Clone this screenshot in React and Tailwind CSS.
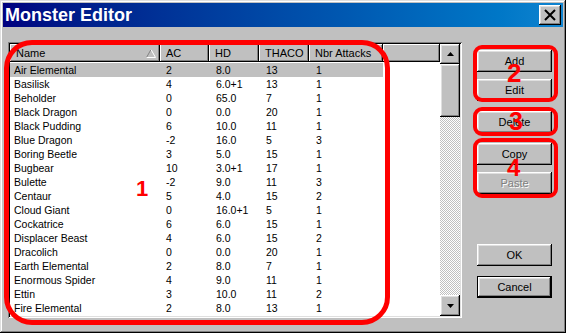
import React from "react";

const MONSTERS = [
  ["Air Elemental", "2", "8.0", "13", "1"],
  ["Basilisk", "4", "6.0+1", "13", "1"],
  ["Beholder", "0", "65.0", "7", "1"],
  ["Black Dragon", "0", "0.0", "20", "1"],
  ["Black Pudding", "6", "10.0", "11", "1"],
  ["Blue Dragon", "-2", "16.0", "5", "3"],
  ["Boring Beetle", "3", "5.0", "15", "1"],
  ["Bugbear", "10", "3.0+1", "17", "1"],
  ["Bulette", "-2", "9.0", "11", "3"],
  ["Centaur", "5", "4.0", "15", "2"],
  ["Cloud Giant", "0", "16.0+1", "5", "1"],
  ["Cockatrice", "6", "6.0", "15", "1"],
  ["Displacer Beast", "4", "6.0", "15", "2"],
  ["Dracolich", "0", "0.0", "20", "1"],
  ["Earth Elemental", "2", "8.0", "7", "1"],
  ["Enormous Spider", "4", "9.0", "11", "1"],
  ["Ettin", "3", "10.0", "11", "2"],
  ["Fire Elemental", "2", "8.0", "13", "1"],
];

const raised =
  "shadow-[inset_-1px_-1px_#000,inset_1px_1px_#fff,inset_-2px_-2px_#808080,inset_2px_2px_#dfdfdf]";

const Button = ({ children, className = "", disabled }) => (
  <button
    type="button"
    className={`w-[75px] h-[22px] bg-[#c0c0c0] ${raised} text-[11px] flex items-center justify-center ${
      disabled ? "text-[#808080] [text-shadow:1px_1px_0_#fff]" : "text-black"
    } ${className}`}
  >
    {children}
  </button>
);

const HeaderCell = ({ w, children, sort }) => (
  <div
    className={`${w} h-[18px] shrink-0 bg-[#c0c0c0] shadow-[inset_-1px_-1px_#000,inset_1px_1px_#fff,inset_-2px_-2px_#808080] flex items-center pl-[6px] pr-[4px] text-[11px] text-black`}
  >
    <span className="flex-1">{children}</span>
    {sort && (
      <svg width="10" height="9" viewBox="0 0 10 9">
        <path d="M0.5 8.5 L5 0.5" stroke="#808080" fill="none" />
        <path d="M5 0.5 L9.5 8.5 L0.5 8.5" stroke="#fff" fill="none" />
      </svg>
    )}
  </div>
);

const Arrow = ({ up }) => (
  <svg width="7" height="4" viewBox="0 0 7 4">
    <path d={up ? "M3.5 0 L7 4 L0 4 Z" : "M0 0 L7 0 L3.5 4 Z"} fill="#000" />
  </svg>
);

export default function App() {
  return (
    <div
      className="relative w-[566px] h-[333px] bg-[#c0c0c0] p-[3px] flex flex-col shadow-[inset_-1px_-1px_#000,inset_1px_1px_#dfdfdf,inset_-2px_-2px_#808080,inset_2px_2px_#fff] overflow-hidden"
      style={{ fontFamily: '"Liberation Sans", Arial, sans-serif' }}
    >
      {/* title bar */}
      <div className="h-[24px] shrink-0 flex items-center bg-linear-to-r from-[#000080] to-[#1084d0] pl-[2px] pr-[2px]">
        <span className="flex-1 text-white font-bold text-[18px] leading-none">Monster Editor</span>
        <div className={`w-[22px] h-[20px] bg-[#c0c0c0] ${raised} flex items-center justify-center`}>
          <svg width="12" height="12" viewBox="0 0 12 12">
            <path d="M1 1 L11 11 M11 1 L1 11" stroke="#000" strokeWidth="2" />
          </svg>
        </div>
      </div>

      {/* body */}
      <div className="flex flex-1 pl-[5px] pt-[15px]">
        {/* list view */}
        <div className="w-[454px] h-[276px] p-[2px] bg-white shadow-[inset_1px_1px_#808080,inset_-1px_-1px_#fff,inset_2px_2px_#000,inset_-2px_-2px_#dfdfdf] flex">
          <div className="flex-1 flex flex-col bg-white overflow-hidden">
            <div className="flex mb-[1px]">
              <HeaderCell w="w-[150px]" sort>Name</HeaderCell>
              <HeaderCell w="w-[49px]">AC</HeaderCell>
              <HeaderCell w="w-[50px]">HD</HeaderCell>
              <HeaderCell w="w-[50px]">THACO</HeaderCell>
              <HeaderCell w="w-[74px]">Nbr Attacks</HeaderCell>
              <HeaderCell w="w-[57px]" />
            </div>
            {MONSTERS.map((m, i) => (
              <div key={m[0]} className="flex h-[14px] text-[10.5px] leading-[14px] text-black">
                <div className={`flex w-[373px] ${i === 0 ? "bg-[#c0c0c0]" : ""}`}>
                  <span className="w-[150px] pl-[4px]">{m[0]}</span>
                  <span className="w-[49px] pl-[6px]">{m[1]}</span>
                  <span className="w-[50px] pl-[7px]">{m[2]}</span>
                  <span className="w-[50px] pl-[7px]">{m[3]}</span>
                  <span className="w-[74px] pl-[7px]">{m[4]}</span>
                </div>
              </div>
            ))}
          </div>
          {/* scrollbar */}
          <div className="w-[20px] flex flex-col">
            <div className={`h-[20px] bg-[#c0c0c0] ${raised} flex items-center justify-center`}>
              <Arrow up />
            </div>
            <div className={`h-[53px] bg-[#c0c0c0] ${raised}`} />
            <div className="flex-1 bg-[repeating-conic-gradient(#c0c0c0_0_25%,#ffffff_0_50%)] bg-[length:2px_2px]" />
            <div className={`h-[21px] bg-[#c0c0c0] ${raised} flex items-center justify-center`}>
              <Arrow />
            </div>
          </div>
        </div>

        {/* buttons */}
        <div className="ml-[15px] flex flex-col pt-[8px]">
          <Button>Add</Button>
          <Button className="mt-[7px]">Edit</Button>
          <Button className="mt-[10px]">Delete</Button>
          <Button className="mt-[10px]">Copy</Button>
          <Button className="mt-[7px]" disabled>Paste</Button>
          <Button className="mt-[50px]">OK</Button>
          <div className="mt-[10px] border border-black w-[75px] h-[22px]">
            <button
              type="button"
              className={`w-full h-full bg-[#c0c0c0] ${raised} text-[11px] text-black flex items-center justify-center`}
            >
              Cancel
            </button>
          </div>
        </div>
      </div>

      {/* red annotations */}
      <div className="absolute left-[4px] top-[40px] w-[386px] h-[285px] border-[5px] border-[#ff0000] rounded-[28px]" />
      <div className="absolute left-[473px] top-[45px] w-[85px] h-[57px] border-4 border-[#ff0000] rounded-[9px]" />
      <div className="absolute left-[473px] top-[107px] w-[85px] h-[29px] border-4 border-[#ff0000] rounded-[9px]" />
      <div className="absolute left-[473px] top-[138px] w-[85px] h-[60px] border-4 border-[#ff0000] rounded-[9px]" />
      <span className="absolute left-[136px] top-[178px] text-[22px] leading-none font-bold text-[#ff0000]">1</span>
      <span className="absolute left-[507px] top-[60px] text-[26px] leading-none font-bold text-[#ff0000]">2</span>
      <span className="absolute left-[509px] top-[109px] text-[25px] leading-none font-bold text-[#ff0000]">3</span>
      <span className="absolute left-[507px] top-[156px] text-[24px] leading-none font-bold text-[#ff0000]">4</span>
    </div>
  );
}
